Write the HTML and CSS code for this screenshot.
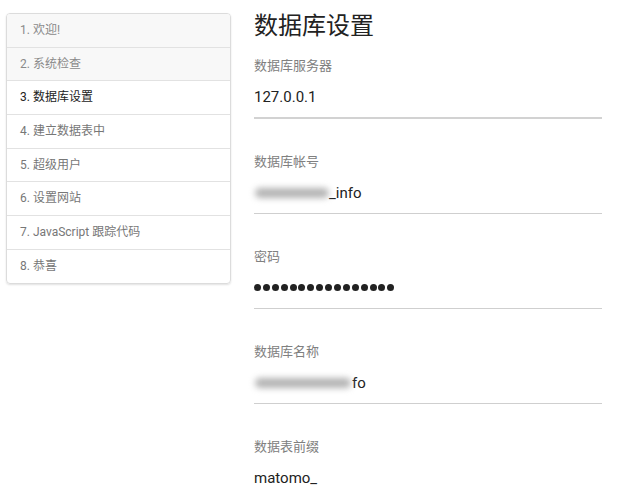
FILE: index.html
```html
<!DOCTYPE html>
<html lang="zh-CN">
<head>
    <meta charset="UTF-8">
    <meta name="viewport" content="width=device-width, initial-scale=1.0">
    <title>数据库设置</title>
    <link rel="stylesheet" href="styles.css">
</head>
<body>
    <div class="page">
        <ul class="steps">
            <li class="step done">1. 欢迎!</li>
            <li class="step done">2. 系统检查</li>
            <li class="step current">3. 数据库设置</li>
            <li class="step">4. 建立数据表中</li>
            <li class="step">5. 超级用户</li>
            <li class="step">6. 设置网站</li>
            <li class="step">7. JavaScript 跟踪代码</li>
            <li class="step">8. 恭喜</li>
        </ul>

        <div class="content">
            <h1 class="title">数据库设置</h1>

            <div class="field first">
                <div class="label">数据库服务器</div>
                <div class="value">127.0.0.1</div>
            </div>

            <div class="field">
                <div class="label">数据库帐号</div>
                <div class="value"><span class="blur user"></span>_info</div>
            </div>

            <div class="field">
                <div class="label">密码</div>
                <div class="value dots">
                    <span></span><span></span><span></span><span></span>
                    <span></span><span></span><span></span><span></span>
                    <span></span><span></span><span></span><span></span>
                    <span></span><span></span><span></span><span></span>
                </div>
            </div>

            <div class="field">
                <div class="label">数据库名称</div>
                <div class="value"><span class="blur dbname"></span>fo</div>
            </div>

            <div class="field">
                <div class="label">数据表前缀</div>
                <div class="value">matomo_</div>
            </div>
        </div>
    </div>
</body>
</html>
```

FILE: styles.css
```css
body {
    margin: 0;
    background-color: #fff;
    font-family: Roboto, "Noto Sans CJK SC", sans-serif;
    color: #222;
}
.page {
    display: flex;
    align-items: flex-start;
}
.steps {
    list-style: none;
    margin: 13px 0 0 6px;
    padding: 0;
    width: 223px;
    border: 1px solid #dcdcdc;
    border-radius: 4px;
    box-shadow: 0 1px 2px rgba(0, 0, 0, 0.12);
    overflow: hidden;
}
.step {
    height: 32.7px;
    line-height: 32.7px;
    padding-left: 13px;
    font-size: 12px;
    color: #777;
    border-bottom: 1px solid #e2e2e2;
}
.step:last-child {
    border-bottom: none;
}
.step.done {
    background-color: #f8f8f8;
    color: #8a8a8a;
}
.step.current {
    color: #222;
}
.content {
    width: 348px;
    margin-left: 23px;
    padding-top: 11px;
}
.title {
    margin: 0 0 15px;
    font-size: 24px;
    line-height: 30px;
    font-weight: normal;
    color: #222;
}
.field {
    margin-bottom: 33px;
}
.label {
    font-size: 13px;
    line-height: 20px;
    color: #808080;
    margin-bottom: 11px;
}
.value {
    font-size: 15px;
    line-height: 20px;
    height: 20px;
    padding-bottom: 10px;
    border-bottom: 1px solid #cfcfcf;
    color: #222;
    display: flex;
    align-items: center;
}
.field.first .value {
    padding-bottom: 9.5px;
    border-bottom: 2px solid #d2d2d2;
}
.blur {
    display: inline-block;
    height: 10px;
    background-color: #b4b4b4;
    border-radius: 5px;
    filter: blur(3px);
}
.blur.user {
    width: 74px;
    margin: 0 0 0 1px;
}
.blur.dbname {
    width: 96px;
    margin: 0 1px 0 1px;
}
.dots {
    gap: 1.9px;
}
.dots span {
    width: 7px;
    height: 7px;
    border-radius: 50%;
    background-color: #222;
}
```
